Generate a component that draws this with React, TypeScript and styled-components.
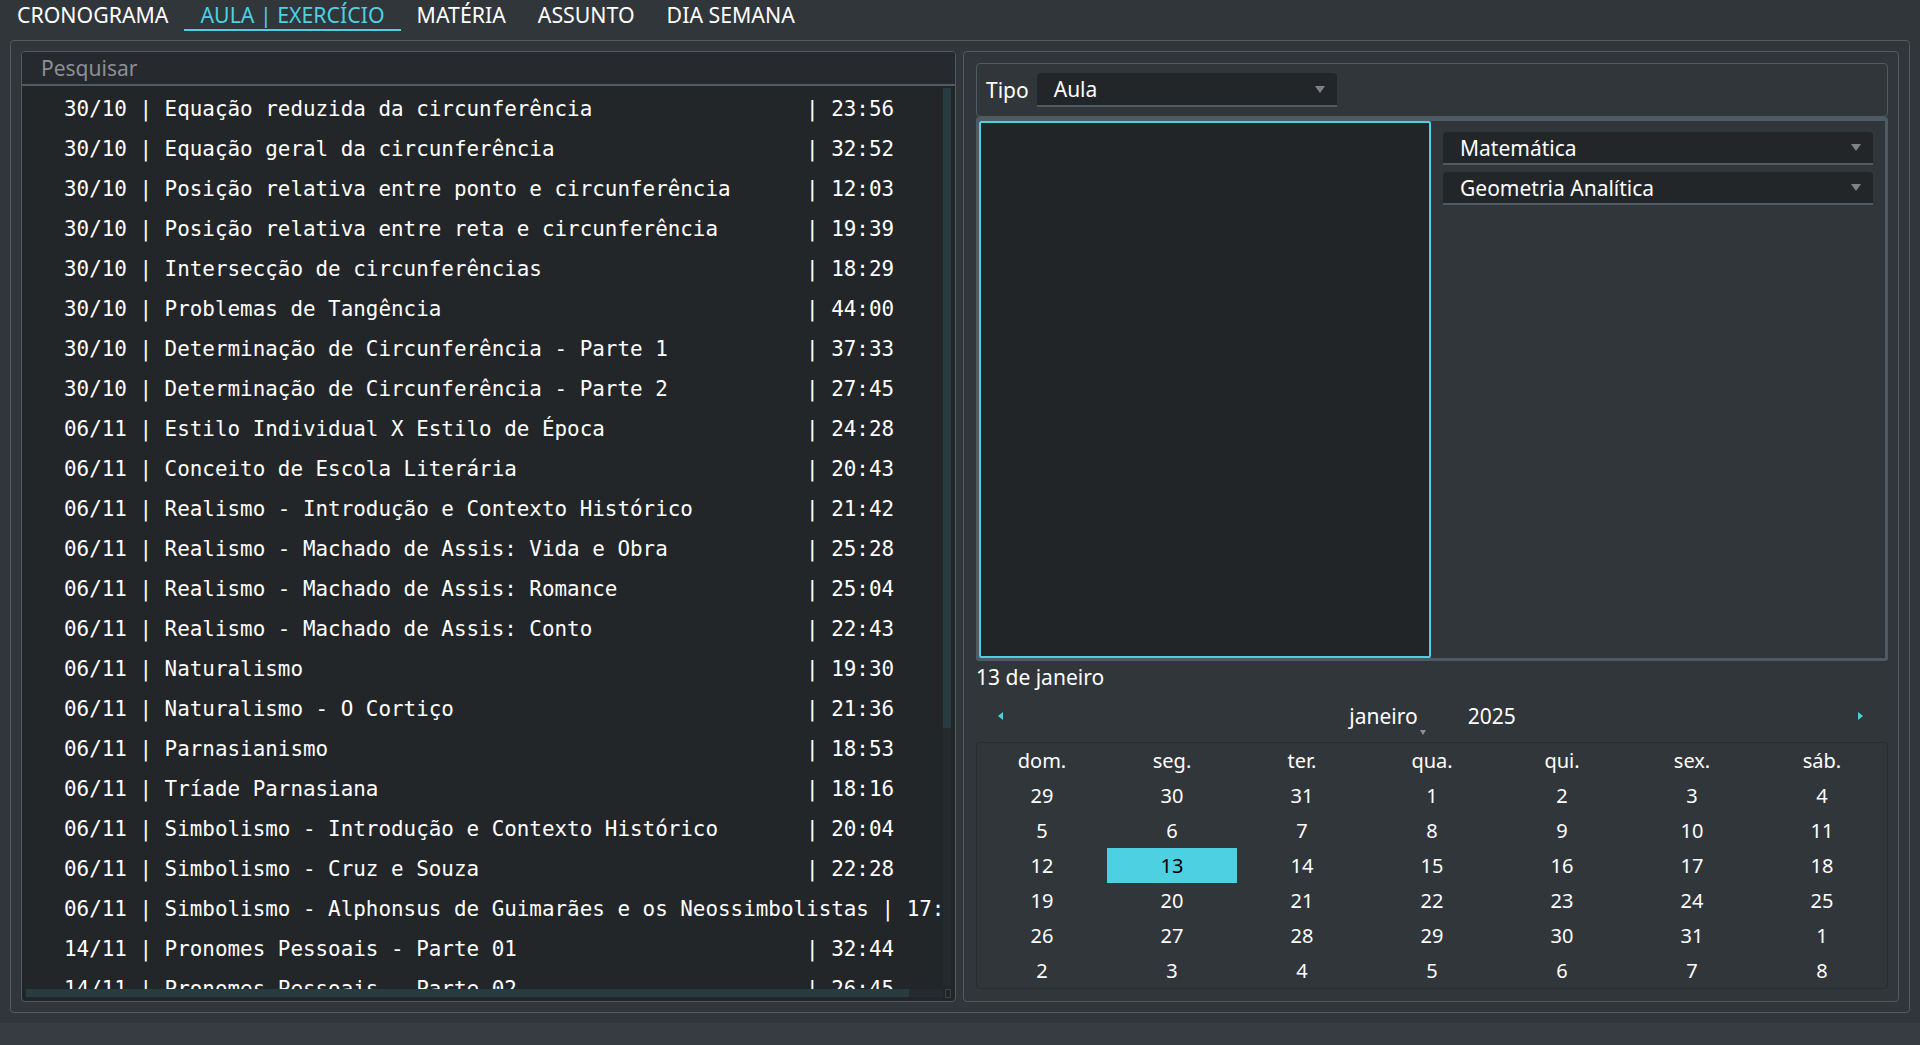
import styled, { createGlobalStyle } from 'styled-components';

const CYAN = '#4dd0e1';
const BG = '#31363b';
const FIELD = '#232629';
const LINE = '#4f5b62';

const GlobalStyle = createGlobalStyle`
  html, body {
    margin: 0;
    padding: 0;
    background: ${BG};
    color: #ffffff;
    font-family: 'Noto Sans', 'Open Sans', sans-serif;
    overflow: hidden;
  }
`;

const tabs = ['CRONOGRAMA', 'AULA | EXERCÍCIO', 'MATÉRIA', 'ASSUNTO', 'DIA SEMANA'];

const aulas: [string, string, string][] = [
  ['30/10', 'Equação reduzida da circunferência', '23:56'],
  ['30/10', 'Equação geral da circunferência', '32:52'],
  ['30/10', 'Posição relativa entre ponto e circunferência', '12:03'],
  ['30/10', 'Posição relativa entre reta e circunferência', '19:39'],
  ['30/10', 'Intersecção de circunferências', '18:29'],
  ['30/10', 'Problemas de Tangência', '44:00'],
  ['30/10', 'Determinação de Circunferência - Parte 1', '37:33'],
  ['30/10', 'Determinação de Circunferência - Parte 2', '27:45'],
  ['06/11', 'Estilo Individual X Estilo de Época', '24:28'],
  ['06/11', 'Conceito de Escola Literária', '20:43'],
  ['06/11', 'Realismo - Introdução e Contexto Histórico', '21:42'],
  ['06/11', 'Realismo - Machado de Assis: Vida e Obra', '25:28'],
  ['06/11', 'Realismo - Machado de Assis: Romance', '25:04'],
  ['06/11', 'Realismo - Machado de Assis: Conto', '22:43'],
  ['06/11', 'Naturalismo', '19:30'],
  ['06/11', 'Naturalismo - O Cortiço', '21:36'],
  ['06/11', 'Parnasianismo', '18:53'],
  ['06/11', 'Tríade Parnasiana', '18:16'],
  ['06/11', 'Simbolismo - Introdução e Contexto Histórico', '20:04'],
  ['06/11', 'Simbolismo - Cruz e Souza', '22:28'],
  ['06/11', 'Simbolismo - Alphonsus de Guimarães e os Neossimbolistas', '17:51'],
  ['14/11', 'Pronomes Pessoais - Parte 01', '32:44'],
  ['14/11', 'Pronomes Pessoais - Parte 02', '26:45'],
];

const weekDays = ['dom.', 'seg.', 'ter.', 'qua.', 'qui.', 'sex.', 'sáb.'];
const days = [
  29, 30, 31, 1, 2, 3, 4,
  5, 6, 7, 8, 9, 10, 11,
  12, 13, 14, 15, 16, 17, 18,
  19, 20, 21, 22, 23, 24, 25,
  26, 27, 28, 29, 30, 31, 1,
  2, 3, 4, 5, 6, 7, 8,
];
const selectedIndex = 15;

function ComboBox({ value, width }: { value: string; width?: number }) {
  return (
    <Combo width={width}>
      <span>{value}</span>
      <Caret dir="down" color="#7d8389" />
    </Combo>
  );
}

export default function App() {
  return (
    <Page>
      <GlobalStyle />
      <TabBar>
        {tabs.map((t, i) => (
          <Tab key={t} active={i === 1}>{t}</Tab>
        ))}
      </TabBar>

      <Main>
        <Frame>
          <LeftPanel>
            <SearchInput>Pesquisar</SearchInput>
            <ListArea>
              <Viewport>
                {aulas.map(([d, title, time], i) => (
                  <Row key={i}>{`${d} | ${title.padEnd(50)} | ${time}`}</Row>
                ))}
              </Viewport>
              <VTrack>
                <Thumb style={{ height: 640 }} />
              </VTrack>
              <HTrack>
                <Thumb style={{ width: 883 }} />
              </HTrack>
              <Corner>
                <span />
              </Corner>
            </ListArea>
          </LeftPanel>

          <RightPanel>
            <TipoBox>
              <Label>Tipo</Label>
              <ComboBox value="Aula" width={300} />
            </TipoBox>

            <LowerBox>
              <FocusBox />
              <SideFilters>
                <ComboBox value="Matemática" />
                <ComboBox value="Geometria Analítica" />
              </SideFilters>
            </LowerBox>

            <DateLabel>13 de janeiro</DateLabel>

            <NavBar>
              <NavArrow>
                <Caret dir="left" color={CYAN} />
              </NavArrow>
              <MonthYear>
                <MonthButton>
                  janeiro
                  <MenuCaret>
                    <Caret dir="down" color="#8a9096" small />
                  </MenuCaret>
                </MonthButton>
                <span>2025</span>
              </MonthYear>
              <NavArrow>
                <Caret dir="right" color={CYAN} />
              </NavArrow>
            </NavBar>

            <CalendarGrid>
              {weekDays.map((w) => (
                <Cell key={w}>{w}</Cell>
              ))}
              {days.map((d, i) => (
                <Cell key={i} selected={i === selectedIndex}>{d}</Cell>
              ))}
            </CalendarGrid>
          </RightPanel>
        </Frame>
      </Main>

      <StatusBar />
    </Page>
  );
}

const Page = styled.div`
  width: 1920px;
  height: 1045px;
  display: flex;
  flex-direction: column;
  background: ${BG};
`;

const TabBar = styled.div`
  height: 31px;
  display: flex;
  padding-left: 1px;
`;

const Tab = styled.div<{ active?: boolean }>`
  height: 31px;
  box-sizing: border-box;
  padding: 0 16px;
  line-height: 29px;
  font-size: 21.3px;
  color: ${({ active }) => (active ? CYAN : '#ffffff')};
  border-bottom: 2px solid ${({ active }) => (active ? CYAN : 'transparent')};
  white-space: nowrap;
`;

const Main = styled.div`
  flex: 1;
  min-height: 0;
  padding: 9px 10px 10px 10px;
  display: flex;
`;

const Frame = styled.div`
  flex: 1;
  border: 1px solid ${LINE};
  border-radius: 4px;
  padding: 10px;
  display: grid;
  grid-template-columns: 935px 936px;
  column-gap: 7px;
`;

const LeftPanel = styled.div`
  border: 1px solid ${LINE};
  border-radius: 4px;
  background: ${FIELD};
  display: flex;
  flex-direction: column;
  overflow: hidden;
  min-height: 0;
`;

const SearchInput = styled.div`
  height: 34px;
  box-sizing: border-box;
  padding-left: 19px;
  line-height: 32px;
  font-size: 21px;
  color: #8b9096;
  background: #26292d;
  border-bottom: 2px solid ${LINE};
`;

const ListArea = styled.div`
  flex: 1;
  min-height: 0;
  display: grid;
  grid-template-columns: 1fr 12px;
  grid-template-rows: 1fr 12px;
`;

const Viewport = styled.div`
  overflow: hidden;
  padding: 3px 0 0 42px;
  min-height: 0;
`;

const Row = styled.div`
  height: 40px;
  line-height: 40px;
  white-space: pre;
  font-family: 'DejaVu Sans Mono', 'Liberation Mono', monospace;
  font-size: 20.9px;
  color: #ffffff;
`;

const VTrack = styled.div`
  margin: 2px 4px 4px 0;
  background: rgba(77, 208, 225, 0.03);
  display: flex;
  flex-direction: column;
`;

const HTrack = styled.div`
  margin: 0 0 4px 4px;
  background: rgba(77, 208, 225, 0.03);
  display: flex;
`;

const Thumb = styled.div`
  flex: none;
  width: 100%;
  height: 100%;
  background: rgba(77, 208, 225, 0.1);
`;

const Corner = styled.div`
  display: flex;
  align-items: flex-start;
  padding: 0 4px 0 2px;

  span {
    width: 6px;
    height: 7px;
    border: 1px solid #3a4045;
  }
`;

const RightPanel = styled.div`
  border: 1px solid ${LINE};
  border-radius: 4px;
  padding: 11px 10px 10px 12px;
  display: flex;
  flex-direction: column;
  min-height: 0;
`;

const TipoBox = styled.div`
  height: 54px;
  box-sizing: border-box;
  border: 1px solid ${LINE};
  border-radius: 4px;
  padding-left: 9px;
  display: flex;
  align-items: center;
  gap: 8px;
`;

const Label = styled.span`
  font-size: 21px;
  line-height: 26px;
`;

const Combo = styled.div<{ width?: number }>`
  width: ${({ width }) => (width ? `${width}px` : 'auto')};
  height: 34px;
  box-sizing: border-box;
  padding: 0 12px 0 17px;
  background: ${FIELD};
  border-bottom: 2px solid ${LINE};
  border-radius: 4px 4px 0 0;
  display: flex;
  align-items: center;
  justify-content: space-between;
  font-size: 21px;
  color: #ffffff;
`;

const Caret = styled.span<{ dir: 'down' | 'left' | 'right'; color: string; small?: boolean }>`
  width: 0;
  height: 0;
  display: inline-block;
  ${({ dir, color, small }) => {
    const a = small ? 3 : 5;
    const b = small ? 5 : 7;
    if (dir === 'down') {
      return `border-left: ${a}px solid transparent; border-right: ${a}px solid transparent; border-top: ${b}px solid ${color};`;
    }
    if (dir === 'left') {
      return `border-top: 4px solid transparent; border-bottom: 4px solid transparent; border-right: 5px solid ${color};`;
    }
    return `border-top: 4px solid transparent; border-bottom: 4px solid transparent; border-left: 5px solid ${color};`;
  }}
`;

const LowerBox = styled.div`
  height: 544px;
  box-sizing: border-box;
  border: 3px solid ${LINE};
  border-top-width: 4px;
  border-radius: 3px;
  display: grid;
  grid-template-columns: 452px 1fr;
`;

const FocusBox = styled.div`
  border: 2px solid ${CYAN};
  border-radius: 2px;
  background: #222528;
`;

const SideFilters = styled.div`
  padding: 11px 12px;
  display: flex;
  flex-direction: column;
  gap: 7px;

  > div {
    height: 33px;
  }
`;

const DateLabel = styled.div`
  padding-top: 3px;
  height: 38px;
  box-sizing: border-box;
  line-height: 26px;
  font-size: 21px;
`;

const NavBar = styled.div`
  height: 34px;
  display: grid;
  grid-template-columns: 48px 1fr 56px;
  align-items: center;
`;

const NavArrow = styled.div`
  display: flex;
  justify-content: center;
`;

const MonthYear = styled.div`
  display: flex;
  justify-content: center;
  gap: 50px;
  font-size: 21px;
  line-height: 26px;
  padding-left: 9px;
`;

const MonthButton = styled.span`
  position: relative;
`;

const MenuCaret = styled.span`
  position: absolute;
  right: -8px;
  bottom: -6px;
  display: flex;
`;

const CalendarGrid = styled.div`
  margin-top: 9px;
  border: 1px solid #282b2f;
  border-radius: 4px;
  display: grid;
  grid-template-columns: repeat(7, 1fr);
  grid-auto-rows: 35px;
`;

const Cell = styled.div<{ selected?: boolean }>`
  display: flex;
  align-items: center;
  justify-content: center;
  font-size: 20px;
  color: ${({ selected }) => (selected ? '#000000' : '#ffffff')};
  background: ${({ selected }) => (selected ? CYAN : 'transparent')};
`;

const StatusBar = styled.div`
  height: 22px;
  background: #373c43;
`;
